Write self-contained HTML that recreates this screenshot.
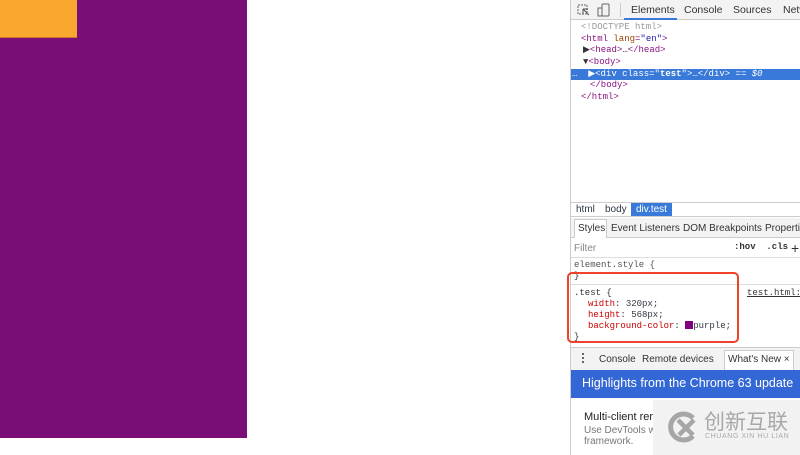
<!DOCTYPE html>
<html><head><meta charset="utf-8"><style>
*{margin:0;padding:0;box-sizing:border-box}
body{width:800px;height:455px;overflow:hidden;background:#fff;position:relative;font-family:"Liberation Sans",sans-serif;font-size:10px;color:#303942}
.a{position:absolute;white-space:nowrap}
.m{font-family:"Liberation Mono",monospace;font-size:9px;line-height:11px}
.tag{color:#881280}.at{color:#994500}.av{color:#1a1aa6}.g{color:#999}
.prop{color:#c80000}
</style></head><body>
<div class="a" style="left:0;top:0;width:247px;height:438px;background:#7a0e79"></div>
<div class="a" style="left:0;top:0;width:77px;height:38px;background:#f9a72e;border-bottom:1px solid #d0732c"></div>

<div class="a" style="left:570px;top:0;width:230px;height:455px;border-left:1px solid #ccc;background:#fff"></div>
<div class="a" style="left:571px;top:0;width:229px;height:20px;background:#f3f3f3;border-bottom:1px solid #ccc"></div>
<svg class="a" style="left:576px;top:3px" width="40" height="14"><rect x="2" y="2" width="9" height="9" fill="none" stroke="#666" stroke-dasharray="2,1"/><path d="M7 6l6 6M7 6v5M7 6h5" stroke="#555" fill="none"/><rect x="26" y="1" width="7" height="12" rx="1" fill="none" stroke="#666"/><rect x="22" y="5" width="4" height="8" fill="none" stroke="#666"/></svg>
<div class="a" style="left:620px;top:3px;width:1px;height:14px;background:#ccc"></div>
<div class="a" style="left:631px;top:4px;color:#333;font-size:10.5px">Elements</div>
<div class="a" style="left:624px;top:18px;width:53px;height:2px;background:#3879d9"></div>
<div class="a" style="left:684px;top:4px;color:#333;font-size:10.5px">Console</div>
<div class="a" style="left:733px;top:4px;color:#333;font-size:10.5px">Sources</div>
<div class="a" style="left:783px;top:4px;color:#333;font-size:10.5px">Netw</div>
<div class="a m g" style="left:581px;top:22px">&lt;!DOCTYPE html&gt;</div>
<div class="a m" style="left:581px;top:34px"><span class="tag">&lt;html </span><span class="at">lang</span><span class="tag">=</span><span class="av">"en"</span><span class="tag">&gt;</span></div>
<div class="a m" style="left:583px;top:45px;color:#333">▶<span class="tag">&lt;head&gt;</span>…<span class="tag">&lt;/head&gt;</span></div>
<div class="a m" style="left:583px;top:57px;color:#333">▼<span class="tag">&lt;body&gt;</span></div>
<div class="a" style="left:571px;top:69px;width:229px;height:11px;background:#3879d9"></div>
<div class="a m" style="left:572px;top:69px;color:#fff">… &nbsp;▶&lt;div class="<b>test</b>"&gt;…&lt;/div&gt; == <i>$0</i></div>
<div class="a m tag" style="left:590px;top:80px">&lt;/body&gt;</div>
<div class="a m tag" style="left:581px;top:92px">&lt;/html&gt;</div>
<div class="a" style="left:571px;top:202px;width:229px;height:15px;border-top:1px solid #ccc;border-bottom:1px solid #ccc;background:#fff"></div>
<div class="a" style="left:576px;top:204px">html</div>
<div class="a" style="left:605px;top:204px">body</div>
<div class="a" style="left:631px;top:203px;width:41px;height:13px;background:#3879d9"></div>
<div class="a" style="left:636px;top:204px;color:#fff">div.test</div>
<div class="a" style="left:571px;top:218px;width:229px;height:20px;background:#f3f3f3;border-bottom:1px solid #ccc"></div>
<div class="a" style="left:574px;top:219px;width:33px;height:19px;background:#fff;border:1px solid #ccc;border-bottom:none"></div>
<div class="a" style="left:578px;top:223px;color:#333">Styles</div>
<div class="a" style="left:611px;top:223px;color:#333">Event Listeners</div>
<div class="a" style="left:683px;top:223px;color:#333">DOM Breakpoints</div>
<div class="a" style="left:765px;top:223px;color:#333">Properties</div>
<div class="a" style="left:574px;top:243px;color:#888">Filter</div>
<div class="a m" style="left:734px;top:242px;color:#333;font-weight:bold">:hov &nbsp;.cls</div>
<div class="a" style="left:791px;top:240px;font-size:14px;color:#333">+</div>
<div class="a" style="left:571px;top:257px;width:229px;height:1px;background:#ddd"></div>
<div class="a m" style="left:574px;top:260px;color:#555">element.style {</div>
<div class="a m" style="left:574px;top:271px;color:#333">}</div>
<div class="a" style="left:571px;top:284px;width:229px;height:1px;background:#ddd"></div>
<div class="a m" style="left:574px;top:288px;color:#333">.test {</div>
<div class="a m" style="left:747px;top:288px;color:#333;text-decoration:underline">test.html:2</div>
<div class="a m" style="left:588px;top:299px"><span class="prop">width</span>: 320px;</div>
<div class="a m" style="left:588px;top:310px"><span class="prop">height</span>: 568px;</div>
<div class="a m" style="left:588px;top:321px"><span class="prop">background-color</span>: <span style="display:inline-block;width:8px;height:8px;background:#800080;vertical-align:-1px"></span>purple;</div>
<div class="a m" style="left:574px;top:332px;color:#333">}</div>
<div class="a" style="left:567px;top:272px;width:172px;height:71px;border:2px solid #f0412a;border-radius:5px"></div>
<div class="a" style="left:571px;top:347px;width:229px;height:23px;background:#f3f3f3;border-top:1px solid #ccc"></div>
<div class="a" style="left:582px;top:353px;width:2px;height:2px;background:#666;box-shadow:0 4px #666,0 8px #666"></div>
<div class="a" style="left:599px;top:354px;color:#333">Console</div>
<div class="a" style="left:642px;top:354px;color:#333">Remote devices</div>
<div class="a" style="left:724px;top:350px;width:70px;height:20px;background:#fff;border:1px solid #ccc;border-bottom:none"></div>
<div class="a" style="left:728px;top:354px;color:#333">What's New ×</div>
<div class="a" style="left:571px;top:370px;width:229px;height:28px;background:#3367d6"></div>
<div class="a" style="left:582px;top:376px;color:#fff;font-size:12.5px">Highlights from the Chrome 63 update</div>
<div class="a" style="left:584px;top:411px;font-size:11px;color:#222">Multi-client rer</div>
<div class="a" style="left:584px;top:425px;font-size:10px;color:#777;line-height:11px">Use DevTools w<br>framework.</div>
<div class="a" style="left:653px;top:400px;width:147px;height:55px;background:#f2f2f2"></div>
<svg class="a" style="left:664px;top:409px" width="38" height="36"><path d="M29 9A13 13 0 1 0 29 27" stroke="#a6a6a6" stroke-width="5" fill="none"/><path d="M14 11l15 15M30 11L15 26" stroke="#a6a6a6" stroke-width="4.5"/></svg>
<div class="a" style="left:704px;top:409px;font-size:21px;line-height:24px;color:#a8a8a8;font-family:'Noto Sans CJK SC',sans-serif">创新互联</div>
<div class="a" style="left:705px;top:433px;font-size:7px;color:#aaa;letter-spacing:0.6px">CHUANG XIN HU LIAN</div>
</body></html>
